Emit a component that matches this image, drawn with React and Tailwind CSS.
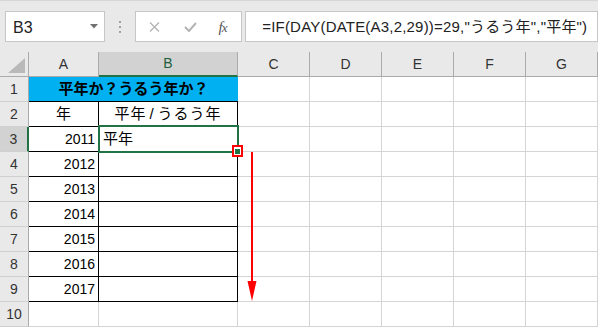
import React from "react";

const JP = "font-['Liberation_Sans','Noto_Sans_CJK_JP',sans-serif]";

const COLS = [
    { key: "A", w: "w-[70px]" },
    { key: "B", w: "w-[139px]" },
    { key: "C", w: "w-[72px]" },
    { key: "D", w: "w-[72px]" },
    { key: "E", w: "w-[72px]" },
    { key: "F", w: "w-[72px]" },
    { key: "G", w: "w-[72px]" },
];

const YEARS = [2011, 2012, 2013, 2014, 2015, 2016, 2017];

const RowHeader = ({ n, selected }) => (
    <div
        className={`w-[29px] h-full shrink-0 flex items-center justify-center text-[14px] border-b border-b-[#d0d0d0] ${selected
            ? "bg-[#d2d2d2] border-r-2 border-r-[#217346] text-[#333]"
            : "bg-[#e9e9e9] border-r border-r-[#ababab] text-[#333]"
            }`}
    >
        {n}
    </div>
);

const Cell = ({ w, children, className = "" }) => (
    <div className={`${w} h-full shrink-0 border-r border-b border-[#d4d4d4] flex items-center text-[14px] text-black ${className}`}>
        {children}
    </div>
);

const Toolbar = () => (
    <div className="h-[52px] bg-[#e9e9e9] border-t border-[#d6d6d6] flex items-start pt-[10px] pl-[5px]">
        {/* Name box */}
        <div className="w-[102px] h-[31px] bg-white border border-[#c6c6c6] flex items-center justify-between pl-[7px] pr-[6px]">
            <span className="text-[16px] text-[#222] pt-[2px]">B3</span>
            <svg width="8" height="5" viewBox="0 0 8 5">
                <polygon points="0,0 8,0 4,4.5" fill="#707070" />
            </svg>
        </div>

        {/* separator dots */}
        <div className="w-[30px] h-[31px] flex flex-col items-center justify-center gap-[3px]">
            <div className="w-[2px] h-[2px] bg-[#a0a0a0]" />
            <div className="w-[2px] h-[2px] bg-[#a0a0a0]" />
            <div className="w-[2px] h-[2px] bg-[#a0a0a0]" />
        </div>

        {/* cancel / enter / fx */}
        <div className="w-[110px] h-[31px] bg-white border border-[#c6c6c6] flex items-center">
            <svg className="ml-[13px]" width="11" height="10" viewBox="0 0 11 10">
                <path d="M1 0.5 L10 9.5 M10 0.5 L1 9.5" stroke="#b4b4b4" strokeWidth="1.3" fill="none" />
            </svg>
            <svg className="ml-[24px]" width="13" height="10" viewBox="0 0 13 10">
                <path d="M1 5 L5 9 L12 1" stroke="#b4b4b4" strokeWidth="2" fill="none" />
            </svg>
            <span className="ml-[22px] font-['Liberation_Serif',serif] italic text-[15px] text-[#555] tracking-[-1px] pt-[1px]">
                f<span className="text-[13px]">x</span>
            </span>
        </div>

        {/* formula */}
        <div className="ml-[3px] w-[360px] h-[31px] bg-white border border-[#c6c6c6] flex items-center pl-[16px]">
            <span className={`${JP} text-[15px] tracking-[0.2px] text-[#222] whitespace-nowrap pt-[2px]`}>
                =IF(DAY(DATE(A3,2,29))=29,"うるう年","平年")
            </span>
        </div>
    </div>
);

const HeaderRow = () => (
    <div className="flex h-[25px] font-['Liberation_Sans',sans-serif]">
        <div className="w-[29px] shrink-0 bg-[#e9e9e9] border-r border-b border-[#ababab] relative">
            <svg className="absolute left-[8px] top-[6px]" width="17" height="15" viewBox="0 0 17 15">
                <polygon points="17,0 17,15 0,15" fill="#b9b9b9" />
            </svg>
        </div>
        {COLS.map((c) =>
            c.key === "B" ? (
                <div
                    key={c.key}
                    className={`${c.w} shrink-0 bg-[#d2d2d2] border-r border-r-[#ababab] border-b-2 border-b-[#217346] flex items-center justify-center text-[14px] text-[#1d5f3a]`}
                >
                    {c.key}
                </div>
            ) : (
                <div
                    key={c.key}
                    className={`${c.w} shrink-0 bg-[#e9e9e9] border-r border-b border-[#ababab] flex items-center justify-center text-[14px] text-[#333]`}
                >
                    {c.key}
                </div>
            )
        )}
    </div>
);

export default function App() {
    return (
        <div className={`w-[598px] h-[327px] overflow-hidden relative bg-white ${JP}`}>
            <Toolbar />
            <HeaderRow />

            {/* row 1 */}
            <div className="flex h-[25px]">
                <RowHeader n={1} />
                <div className="w-[209px] h-full shrink-0 bg-[#00b0f0] border-b border-black flex items-center justify-center text-[15px] font-bold text-black">
                    平年か？うるう年か？
                </div>
                {COLS.slice(2).map((c) => (
                    <Cell key={c.key} w={c.w} />
                ))}
            </div>

            {/* row 2 */}
            <div className="flex h-[25px]">
                <RowHeader n={2} />
                <Cell w="w-[70px]" className="border-black justify-center text-[15px]">年</Cell>
                <Cell w="w-[139px]" className="border-black justify-center text-[15px] tracking-[1px]">
                    平年<span className="px-[3px]">/</span>うるう年
                </Cell>
                {COLS.slice(2).map((c) => (
                    <Cell key={c.key} w={c.w} />
                ))}
            </div>

            {/* rows 3-9 */}
            {YEARS.map((y, i) => (
                <div key={y} className="flex h-[25px]">
                    <RowHeader n={i + 3} selected={i === 0} />
                    <Cell w="w-[70px]" className="border-black justify-end pr-[3px]">{y}</Cell>
                    <Cell w="w-[139px]" className="border-black pl-[4px] text-[15px]">{i === 0 ? "平年" : ""}</Cell>
                    {COLS.slice(2).map((c) => (
                        <Cell key={c.key} w={c.w} />
                    ))}
                </div>
            ))}

            {/* row 10 */}
            <div className="flex h-[25px]">
                <RowHeader n={10} />
                {COLS.map((c) => (
                    <Cell key={c.key} w={c.w} />
                ))}
            </div>

            {/* selection of B3 */}
            <div className="absolute left-[98px] top-[125px] w-[141px] h-[28px] border-2 border-[#217346]" />

            {/* fill handle with red marker */}
            <div className="absolute left-[232px] top-[145px] w-[11px] h-[12px] border-2 border-[#ff0000] bg-white flex items-center justify-center">
                <div className="w-[5px] h-[5px] bg-[#217346]" />
            </div>

            {/* drag arrow */}
            <svg className="absolute left-[245px] top-[151px]" width="14" height="152" viewBox="0 0 14 152">
                <line x1="7" y1="1" x2="7" y2="134" stroke="#ff0000" strokeWidth="2" />
                <polygon points="2.5,130 11.5,130 7,150" fill="#ff0000" />
            </svg>
        </div>
    );
}
